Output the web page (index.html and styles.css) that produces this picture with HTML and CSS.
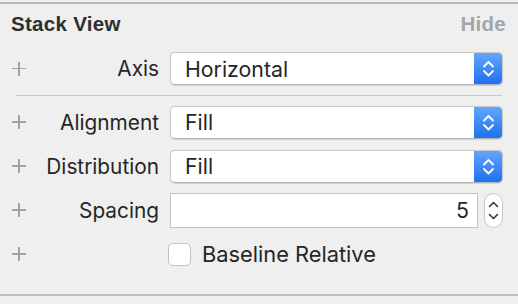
FILE: index.html
```html
<!DOCTYPE html>
<html lang="en">
<head>
    <meta charset="UTF-8">
    <title>Stack View</title>
    <link rel="stylesheet" href="styles.css">
</head>
<body>
    <div class="panel">
        <div class="header">
            <span class="title">Stack View</span>
            <span class="hide">Hide</span>
        </div>

        <div class="row row-axis">
            <span class="plus"></span>
            <span class="label">Axis</span>
            <div class="popup">
                <span class="popup-text">Horizontal</span>
                <span class="popup-arrows">
                    <svg width="29" height="33" viewBox="0 0 29 33"><path d="M10 14.5 L14.5 10 L19 14.5 M10 19 L14.5 23.5 L19 19" fill="none" stroke="#fff" stroke-width="1.8" stroke-linecap="round" stroke-linejoin="round"/></svg>
                </span>
            </div>
        </div>

        <div class="separator"></div>

        <div class="row">
            <span class="plus"></span>
            <span class="label">Alignment</span>
            <div class="popup">
                <span class="popup-text">Fill</span>
                <span class="popup-arrows">
                    <svg width="29" height="33" viewBox="0 0 29 33"><path d="M10 14.5 L14.5 10 L19 14.5 M10 19 L14.5 23.5 L19 19" fill="none" stroke="#fff" stroke-width="1.8" stroke-linecap="round" stroke-linejoin="round"/></svg>
                </span>
            </div>
        </div>

        <div class="row">
            <span class="plus"></span>
            <span class="label">Distribution</span>
            <div class="popup">
                <span class="popup-text">Fill</span>
                <span class="popup-arrows">
                    <svg width="29" height="33" viewBox="0 0 29 33"><path d="M10 14.5 L14.5 10 L19 14.5 M10 19 L14.5 23.5 L19 19" fill="none" stroke="#fff" stroke-width="1.8" stroke-linecap="round" stroke-linejoin="round"/></svg>
                </span>
            </div>
        </div>

        <div class="row">
            <span class="plus"></span>
            <span class="label">Spacing</span>
            <div class="field-group">
                <div class="field">5</div>
                <div class="stepper">
                    <svg width="19" height="35" viewBox="0 0 19 35"><path d="M5.5 13.5 L9.5 9.5 L13.5 13.5 M5.5 21.5 L9.5 25.5 L13.5 21.5" fill="none" stroke="#333" stroke-width="1.6" stroke-linecap="round" stroke-linejoin="round"/></svg>
                </div>
            </div>
        </div>

        <div class="row">
            <span class="plus"></span>
            <span class="label"></span>
            <label class="check">
                <span class="checkbox"></span>
                <span class="check-text">Baseline Relative</span>
            </label>
        </div>
    </div>
</body>
</html>
```

FILE: styles.css
```css
body {
    margin: 0;
    padding-top: 2px;
    background-color: #efefef;
    font-family: Inter, "Liberation Sans", Arial, sans-serif;
    color: #262626;
}

.panel {
    border-top: 2px solid #b9b9b9;
    border-bottom: 2px solid #bdbdbd;
    height: 294px;
    box-sizing: border-box;
    padding: 0 15px 0 12px;
}

.header {
    display: flex;
    justify-content: space-between;
    height: 42px;
    padding-top: 8px;
    box-sizing: border-box;
    font-family: "Liberation Sans", Arial, sans-serif;
    font-size: 20.5px;
    font-weight: bold;
    letter-spacing: 0.3px;
    line-height: 24px;
}

.title {
    color: #2e2e2e;
    margin-left: -1px;
}

.hide {
    color: #a3a6ab;
    margin-right: -3px;
}

.row {
    display: grid;
    grid-template-columns: 14px 1fr 333px;
    align-items: center;
    height: 44px;
}

.row-axis {
    height: 45px;
}

.plus {
    position: relative;
    width: 14px;
    height: 14px;
}

.plus::before,
.plus::after {
    content: "";
    position: absolute;
    background-color: #a2a2a2;
}

.plus::before {
    left: 0;
    top: 6px;
    width: 14px;
    height: 1.5px;
}

.plus::after {
    left: 6.25px;
    top: 0;
    width: 1.5px;
    height: 14px;
}

.label {
    text-align: right;
    padding-right: 11px;
    font-size: 20.8px;
}

.popup {
    display: flex;
    align-items: center;
    height: 33px;
    background-color: #fff;
    border: 1px solid #cbcbcb;
    border-bottom-color: #b3b3b3;
    border-radius: 5px;
    box-sizing: border-box;
    overflow: hidden;
    box-shadow: 0 0.5px 1px rgba(0, 0, 0, 0.12);
}

.popup-text {
    flex: 1;
    padding-left: 14px;
    font-size: 21.3px;
}

.popup-arrows {
    display: flex;
    width: 29px;
    height: 33px;
    margin: -1px -1px -1px 0;
    background: linear-gradient(#66a7fa, #1a70f1);
    border-radius: 0 5px 5px 0;
}

.separator {
    height: 1px;
    margin: 4px 1px 4px 4px;
    background-color: #c9c9c9;
}

.field-group {
    display: flex;
    align-items: center;
    gap: 6px;
}

.field {
    flex: 1;
    height: 35px;
    line-height: 33px;
    box-sizing: border-box;
    background-color: #fff;
    border: 1px solid #c4c4c4;
    text-align: right;
    padding-right: 8px;
    font-size: 21.3px;
}

.stepper {
    display: flex;
    width: 19px;
    height: 35px;
    box-sizing: border-box;
    background-color: #fff;
    border: 1px solid #c8c8c8;
    border-radius: 10px;
}

.stepper svg {
    margin: -1px;
}

.check {
    display: flex;
    align-items: center;
    gap: 11px;
    margin-left: -2px;
}

.checkbox {
    width: 23px;
    height: 23px;
    box-sizing: border-box;
    background-color: #fff;
    border: 1px solid #c2c2c2;
    border-radius: 5px;
}

.check-text {
    font-size: 21.8px;
}
```
